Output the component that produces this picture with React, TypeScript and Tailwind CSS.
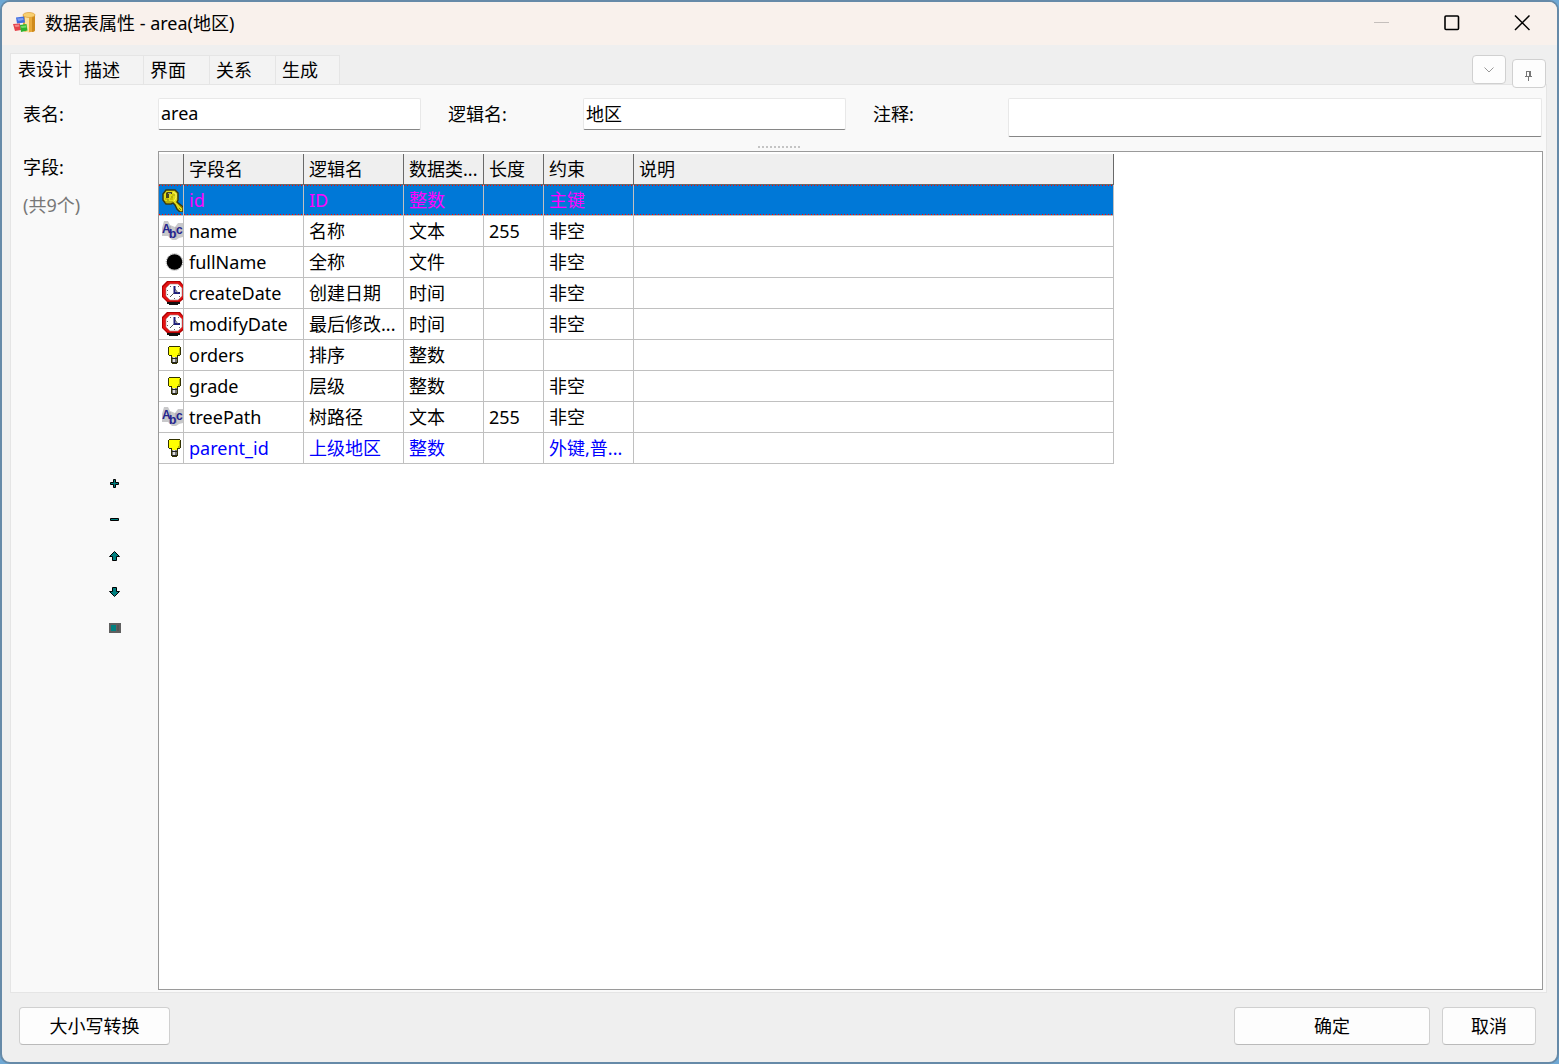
import { useState } from 'react';

type IconKind = 'key' | 'text' | 'file' | 'time' | 'number';

type Field = {
  icon: IconKind;
  name: string;
  label: string;
  type: string;
  length: string;
  constraint: string;
  color?: string;
};

const tabs = [
  { label: '描述', className: 'w-16 pl-1' },
  { label: '界面', className: 'w-[66px] pl-[6px]' },
  { label: '关系', className: 'w-[66px] pl-[6px]' },
  { label: '生成', className: 'w-16 pl-[6px]' },
];

const columns = ['', '字段名', '逻辑名', '数据类...', '长度', '约束', '说明'];

const fields: Field[] = [
  { icon: 'key', name: 'id', label: 'ID', type: '整数', length: '', constraint: '主键' },
  { icon: 'text', name: 'name', label: '名称', type: '文本', length: '255', constraint: '非空' },
  { icon: 'file', name: 'fullName', label: '全称', type: '文件', length: '', constraint: '非空' },
  { icon: 'time', name: 'createDate', label: '创建日期', type: '时间', length: '', constraint: '非空' },
  { icon: 'time', name: 'modifyDate', label: '最后修改...', type: '时间', length: '', constraint: '非空' },
  { icon: 'number', name: 'orders', label: '排序', type: '整数', length: '', constraint: '' },
  { icon: 'number', name: 'grade', label: '层级', type: '整数', length: '', constraint: '非空' },
  { icon: 'text', name: 'treePath', label: '树路径', type: '文本', length: '255', constraint: '非空' },
  { icon: 'number', name: 'parent_id', label: '上级地区', type: '整数', length: '', constraint: '外键,普...', color: 'text-[#0000ff]' },
];

const inputClass =
  'w-full bg-white border border-[#e8e8e8] border-b-[#868686] rounded-xs px-[2px] outline-none';
const buttonClass =
  'h-[38px] bg-[#fdfdfd] border border-[#d0d0d0] border-b-[#bababa] rounded-[4px]';
// dotted focus line along the top and the bottom of the selected row
const focusDots =
  'bg-[repeating-linear-gradient(90deg,#ff0000_0_1px,transparent_1px_3px),repeating-linear-gradient(90deg,#ff0000_0_1px,transparent_1px_3px)] bg-[length:100%_1px,100%_1px] bg-[position:0_0,0_100%] bg-no-repeat';

function AppIcon() {
  return (
    <svg width="24" height="24" viewBox="0 0 24 24" aria-hidden="true">
      <path d="M10 4v15c1 3 11 3 12 0V4z" fill="#e9a93a" />
      <path d="M12 5v15c1 1 3 1 4 1V6z" fill="#fbe0a0" />
      <path d="M19 6v15c2 0 3-1 3-2V4z" fill="#cf8a1c" />
      <ellipse cx="16" cy="4" rx="6" ry="2.500" fill="#f8cf70" stroke="#dc9c38" strokeWidth=".7" />
      <path d="M3 6.500l8-1 1 6-8 1z" fill="#3f6be0" />
      <path d="M4 7.500l6-.5.5 2-5 1z" fill="#7d9df2" />
      <path d="M0 13l7-.5 1 6.500-6 1z" fill="#e4434a" />
      <path d="M1.500 14l4.500-.5.5 2-4 .5z" fill="#f2898b" />
      <path d="M7 14l6.500-1 1 6.500-6.500 1.500z" fill="#2cb22c" />
      <path d="M8 15l5-.5.5 2-5 .5z" fill="#74dc66" />
    </svg>
  );
}

function FieldIcon({ kind }: { kind: IconKind }) {
  return (
    <svg width="21" height="24" viewBox="0 0 21 24" className="block shrink-0" aria-hidden="true">
      {kind === 'key' && (
        <>
          <path
            d="M4 2h9l3 3v7l-1 2 6 5v5h-3l-3-3-2-4-2-2-2 1H4l-3-4V6z"
            fill="#e0dc18"
            stroke="#3a3a10"
            strokeWidth="1.500"
          />
          <path d="M5 4h5v2H7v4H4V5z" fill="#45451b" />
          <path d="M6 5h3v1H6z" fill="#9a9a88" />
          <path d="M11 4l3 2v4l-2 3" fill="none" stroke="#f8f46a" />
          <path d="M3 14h8M5 12h2M9 9h2M14 14l6 6M17 20l2 2" stroke="#8a8600" strokeWidth="1" />
          <path d="M10 7h3M8 11h3M3 11h3" stroke="#aaa500" strokeWidth="1" />
        </>
      )}
      {kind === 'text' && (
        <>
          <path d="M0 9l2-7h4l2 4 5 2 3-4h5v14l-4 1-3 2h-4l-4-4H0z" fill="#c8c8ca" />
          <path d="M8 7v11M14 8v10" fill="none" stroke="#9a9aa8" />
          <g fill="#24248e" fontFamily="Liberation Sans" fontWeight="bold">
            <text x="0" y="14" fontSize="12">A</text>
            <text x="7" y="19" fontSize="12">b</text>
            <text x="14" y="15" fontSize="12">c</text>
          </g>
        </>
      )}
      {kind === 'file' && (
        <>
          <circle cx="12.500" cy="12" r="8.300" fill="none" stroke="#999" strokeWidth="1" strokeDasharray="1 1" />
          <circle cx="12.500" cy="12" r="7.800" fill="#000" />
        </>
      )}
      {kind === 'time' && (
        <>
          <path d="M5 20h13v3h-2v1H7v-1H5z" fill="#111" />
          <path d="M5 0h13l5 6v11l-5 4H5l-5-5V5z" fill="#b00000" />
          <path d="M6 1h11l5 5v10l-5 4H6l-5-4V6z" fill="#e41414" />
          <path d="M8 3h8l4 4v8l-4 4H8l-4-4V7z" fill="#fff" stroke="#a88" strokeWidth=".6" />
          <path d="M12.500 5v7H18" fill="none" stroke="#20207c" strokeWidth="2" />
          <path d="M13 8l3 4M12 12l-4 4" fill="none" stroke="#555" strokeWidth="1" />
          <path d="M8 5.500h1M5 9.500h1M16 5.500h1M5 13.500h1M12 17.500h1M17 15.500h1" stroke="#666" />
        </>
      )}
      {kind === 'number' && (
        <g shapeRendering="crispEdges">
          <path d="M7 3h11v1h1v8h-1v1h-2v7h-1v1h-5v-1H9v-7H7v-1H6V4h1z" fill="#333300" />
          <path d="M7 4h11v8h-3v2h-5v-2H7z" fill="#ffff00" />
          <path d="M17 5h1v7h-2v-2h1z" fill="#b8b800" />
          <path d="M10 14h5v6h-5z" fill="#777" />
          <path d="M11 14h2v5h-2z" fill="#ddd" />
          <path d="M10 15h5v1h-5zM10 19h5v1h-5z" fill="#222" />
        </g>
      )}
    </svg>
  );
}

const tools = [
  { title: '添加', d: 'M6.500 3.500h2v3h3v2h-3v3h-2v-3h-3v-2h3z' },
  { title: '删除', d: 'M3.500 6.500h8v2h-8z' },
  { title: '上移', d: 'M7.500 3.500l5 5h-3v4h-4v-4h-3z' },
  { title: '下移', d: 'M7.500 12.500l5-5h-3v-4h-4v4h-3z' },
];

function TitleBar() {
  return (
    <header className="h-[43px] shrink-0 flex items-center bg-[#f9f1ec] pl-[11px] pb-[2px]">
      <AppIcon />
      <h1 className="ml-2 flex-1">数据表属性 - area(地区)</h1>
      <button aria-label="最小化" className="w-[70px] h-full flex items-center justify-center">
        <svg width="16" height="16" viewBox="0 0 16 16">
          <path d="M0 7.500h15" stroke="#c5bfbc" />
        </svg>
      </button>
      <button aria-label="最大化" className="w-[70px] h-full flex items-center justify-center">
        <svg width="16" height="16" viewBox="0 0 16 16">
          <rect x="1" y="1" width="13.500" height="13.500" rx="1" fill="none" stroke="#000" strokeWidth="1.600" />
        </svg>
      </button>
      <button aria-label="关闭" className="w-[70px] h-full flex items-center justify-center">
        <svg width="16" height="16" viewBox="0 0 16 16">
          <path d="M1 .500l14.500 14.500M15.500.500L1 15" stroke="#000" strokeWidth="1.500" />
        </svg>
      </button>
    </header>
  );
}

function TabBar() {
  return (
    <div className="flex items-end ml-2 mr-[10px] h-[39px]">
      <div role="tablist" className="flex items-end flex-1">
        <button
          role="tab"
          aria-selected="true"
          className="relative -mb-px w-[70px] h-8 pb-px bg-[#f9f9f9] border border-b-0 border-[#e5e5e5]"
        >
          表设计
        </button>
        {tabs.map(tab => (
          <button
            key={tab.label}
            role="tab"
            aria-selected="false"
            className={`h-[29px] text-left bg-[#f3f3f3] border-t border-r border-[#e5e5e5] ${tab.className}`}
          >
            {tab.label}
          </button>
        ))}
      </div>
      <button
        aria-label="更多"
        className="relative w-[34px] h-[29px] mr-[6px] flex items-center justify-center bg-[#fdfdfd] border border-[#d0d0d0] rounded-[4px]"
      >
        <svg width="10" height="6" viewBox="0 0 10 6">
          <path d="M.5.500L5 5 9.500.500" fill="none" stroke="#999" />
        </svg>
      </button>
      <button
        aria-label="固定"
        className="relative -mb-1 mr-px w-[34px] h-[29px] flex items-center justify-center bg-[#fdfdfd] border border-[#d0d0d0] rounded-[4px]"
      >
        <svg width="8" height="10" viewBox="0 0 8 10" shapeRendering="crispEdges" className="mt-1">
          <path d="M1 0h5v5h1v1H4v4H3V6H0V5h1zM2 1v4h2V1z" fill="#777" fillRule="evenodd" />
        </svg>
      </button>
    </div>
  );
}

export default function App() {
  const [tableName, setTableName] = useState('area');
  const [logicName, setLogicName] = useState('地区');
  const [remark, setRemark] = useState('');
  const [selected, setSelected] = useState(0);

  return (
    <div className="min-h-screen flex bg-[#6fa8d4] text-black text-[18px] leading-6 font-['Noto_Sans','Noto_Sans_CJK_SC',sans-serif]">
      <div className="flex-1 min-w-0 flex flex-col bg-[#efefef] border-2 border-[#668aa8] rounded-[10px] overflow-hidden">
        <TitleBar />
        <TabBar />

        <main className="flex-1 flex flex-col ml-2 mr-[10px] border border-[#e5e5e5] bg-[#f9f9f9] pl-3 pr-[3px] pb-[2px]">
          <div className="grid grid-cols-[135px_263px_27px_135px_263px_27px_135px_1fr] pt-[13px]">
            <label htmlFor="table-name" className="pt-1">表名:</label>
            <input
              id="table-name"
              className={`${inputClass} h-8 pb-[2px]`}
              value={tableName}
              onChange={e => setTableName(e.target.value)}
            />
            <span />
            <label htmlFor="logic-name" className="pt-1">逻辑名:</label>
            <input
              id="logic-name"
              className={`${inputClass} h-8 pb-[2px]`}
              value={logicName}
              onChange={e => setLogicName(e.target.value)}
            />
            <span />
            <label htmlFor="remark" className="pt-1">注释:</label>
            <div className="pr-px">
              <input
                id="remark"
                className={`${inputClass} h-[39px] block`}
                value={remark}
                onChange={e => setRemark(e.target.value)}
              />
            </div>
          </div>

          <div className="h-[14px] flex items-center justify-center gap-[2px] pt-[6px] pr-2">
            {Array.from({ length: 11 }, (_, i) => (
              <span key={i} className="size-[2px] bg-[#c4c4c4]" />
            ))}
          </div>

          <div className="flex-1 flex">
            <div className="w-[135px] shrink-0">
              <p className="pt-1">字段:</p>
              <p className="pt-[14px] text-[#777]">(共9个)</p>
              <div className="flex flex-col items-center gap-3 w-6 ml-[79px] mt-[254px]">
                {tools.map(tool => (
                  <button key={tool.title} aria-label={tool.title} className="size-6 pl-px pt-px flex items-center justify-center">
                    <svg width="15" height="15" viewBox="0 0 15 15">
                      <path d={tool.d} fill="#008080" stroke="#000" strokeWidth="1" />
                    </svg>
                  </button>
                ))}
                <button aria-label="属性" className="size-6 pl-[2px] pt-[2px] flex items-center justify-center">
                  <svg width="12" height="10" viewBox="0 0 12 10" shapeRendering="crispEdges">
                    <path d="M0 0h12v10H0z" fill="#606060" />
                    <path d="M2 2h5v6H2z" fill="#008080" />
                    <path d="M8 2h2v6H8z" fill="#555" />
                  </svg>
                </button>
              </div>
            </div>

            <div className="flex-1 min-w-0 bg-white border border-[#9a9a9a] pt-[2px] overflow-hidden">
              <table className="w-[955px] table-fixed border-separate border-spacing-0">
                <colgroup>
                  <col className="w-[25px]" />
                  <col className="w-[120px]" />
                  <col className="w-[100px]" />
                  <col className="w-[80px]" />
                  <col className="w-[60px]" />
                  <col className="w-[90px]" />
                  <col />
                </colgroup>
                <thead>
                  <tr className="h-[31px]">
                    {columns.map(column => (
                      <th
                        key={column}
                        className="h-[31px] p-0 pl-[5px] text-left font-normal whitespace-nowrap bg-[#efefef] border-r border-b border-[#696969]"
                      >
                        {column}
                      </th>
                    ))}
                  </tr>
                </thead>
                <tbody>
                  {fields.map((field, index) => {
                    const active = index === selected;
                    return (
                      <tr
                        key={field.name}
                        onClick={() => setSelected(index)}
                        className={active ? 'bg-[#0078d7] text-[#ff00ff]' : field.color}
                      >
                        <td className="p-0 border-r border-b border-[#c0c0c0]">
                          <div className={`h-[30px] flex items-center pl-[3px] ${active ? focusDots : ''}`}>
                            <FieldIcon kind={field.icon} />
                          </div>
                        </td>
                        {[field.name, field.label, field.type, field.length, field.constraint, ''].map((text, i) => (
                          <td key={i} className="p-0 border-r border-b border-[#c0c0c0]">
                            <div
                              className={`h-[30px] flex items-center pl-[5px] whitespace-nowrap ${active ? focusDots : ''}`}
                            >
                              {text}
                            </div>
                          </td>
                        ))}
                      </tr>
                    );
                  })}
                </tbody>
              </table>
            </div>
          </div>
        </main>

        <footer className="flex pl-[17px] pr-[21px] pt-[14px] pb-[17px]">
          <button className={`${buttonClass} w-[151px]`}>大小写转换</button>
          <div className="flex-1" />
          <button className={`${buttonClass} w-[196px] mr-3`}>确定</button>
          <button className={`${buttonClass} w-[94px]`}>取消</button>
        </footer>
      </div>
    </div>
  );
}
